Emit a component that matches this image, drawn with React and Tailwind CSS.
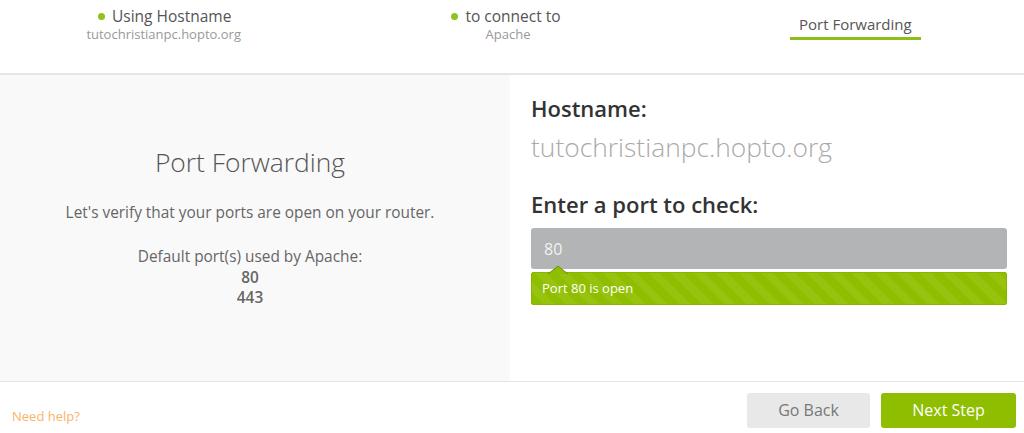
import React from "react";

export default function App() {
  const font = { fontFamily: '"Open Sans", "Liberation Sans", sans-serif' };
  return (
    <div className="w-[1024px] h-[433px] bg-white flex flex-col overflow-hidden" style={font}>
      {/* Header steps */}
      <div className="h-[75px] shrink-0 border-b-2 border-[#e6e6e6] grid grid-cols-3">
        <div className="flex flex-col items-center pt-[6px] pr-[12px]">
          <div className="flex items-center gap-[7px] text-[15.5px] leading-[20px] text-[#555]">
            <span className="w-[7px] h-[7px] rounded-full bg-[#8dc21f]" />
            <span>Using Hostname</span>
          </div>
          <div className="text-[13px] leading-[16px] text-[#999] -ml-[2px]">tutochristianpc.hopto.org</div>
        </div>
        <div className="flex flex-col items-center pt-[6px] pr-[12px]">
          <div className="flex items-center gap-[7px] text-[15.5px] leading-[20px] text-[#555]">
            <span className="w-[7px] h-[7px] rounded-full bg-[#8dc21f]" />
            <span>to connect to</span>
          </div>
          <div className="text-[13px] leading-[16px] text-[#999] ml-[4px]">Apache</div>
        </div>
        <div className="flex flex-col items-center pt-[14px] pl-[4px]">
          <div className="text-[15px] leading-[20px] text-[#555] px-[9px] pb-[3px] border-b-[3px] border-[#8fbe1c]">
            Port Forwarding
          </div>
        </div>
      </div>

      {/* Main */}
      <div className="flex-1 flex border-b border-[#e4e4e4]">
        <div className="w-[510px] bg-[#f9f9f9] flex flex-col items-center justify-center pr-[10px] pb-[4px] text-center">
          <h1 className="text-[26.4px] leading-[36px] font-light text-[#555]">Port Forwarding</h1>
          <p className="mt-[22px] text-[15.4px] leading-[22px] text-[#666]">
            Let's verify that your ports are open on your router.
          </p>
          <p className="mt-[22px] text-[15.4px] leading-[22px] text-[#666]">Default port(s) used by Apache:</p>
          <p className="text-[15.4px] leading-[20px] font-semibold text-[#666]">80</p>
          <p className="text-[15.4px] leading-[20px] font-semibold text-[#666]">443</p>
        </div>
        <div className="flex-1 pl-[21px] pr-[17px] pt-[18px]">
          <div className="text-[22px] leading-[30px] font-semibold text-[#333]">Hostname:</div>
          <div className="mt-[7px] text-[26.4px] leading-[34px] font-light text-[#aaa]">tutochristianpc.hopto.org</div>
          <div className="mt-[25px] text-[22px] leading-[30px] font-semibold text-[#333]">Enter a port to check:</div>
          <div className="mt-[9px] h-[41px] rounded-[3px] bg-[#b3b4b5] flex items-center px-[13px] text-[16px] text-[#f2f2f2]">
            80
          </div>
          <div className="relative mt-[3px] h-[33px] rounded-[2px] border border-[#88b500] bg-[repeating-linear-gradient(45deg,#8fbe00_0px,#8fbe00_8px,#97c30e_8px,#97c30e_16px)] flex items-center px-[10px] text-[13px] text-white">
            <svg className="absolute left-[16px] -top-[8px]" width="20" height="9" viewBox="0 0 20 9">
              <path d="M0 9 L10 1 L20 9" fill="#8fbe00" stroke="#6e8a1a" strokeWidth="1" />
            </svg>
            Port 80 is open
          </div>
        </div>
      </div>

      {/* Footer */}
      <div className="h-[51px] shrink-0 flex items-center justify-between pl-[12px] pr-[8px]">
        <span className="text-[13px] text-[#f9b46a] mt-[18px]">Need help?</span>
        <div className="flex gap-[11px] mt-[5px]">
          <button className="w-[123px] h-[35px] rounded-[3px] bg-[#e8e8e8] text-[16px] text-[#777]">Go Back</button>
          <button className="w-[135px] h-[35px] rounded-[3px] bg-[#8fbe00] text-[16px] text-white">Next Step</button>
        </div>
      </div>
    </div>
  );
}
